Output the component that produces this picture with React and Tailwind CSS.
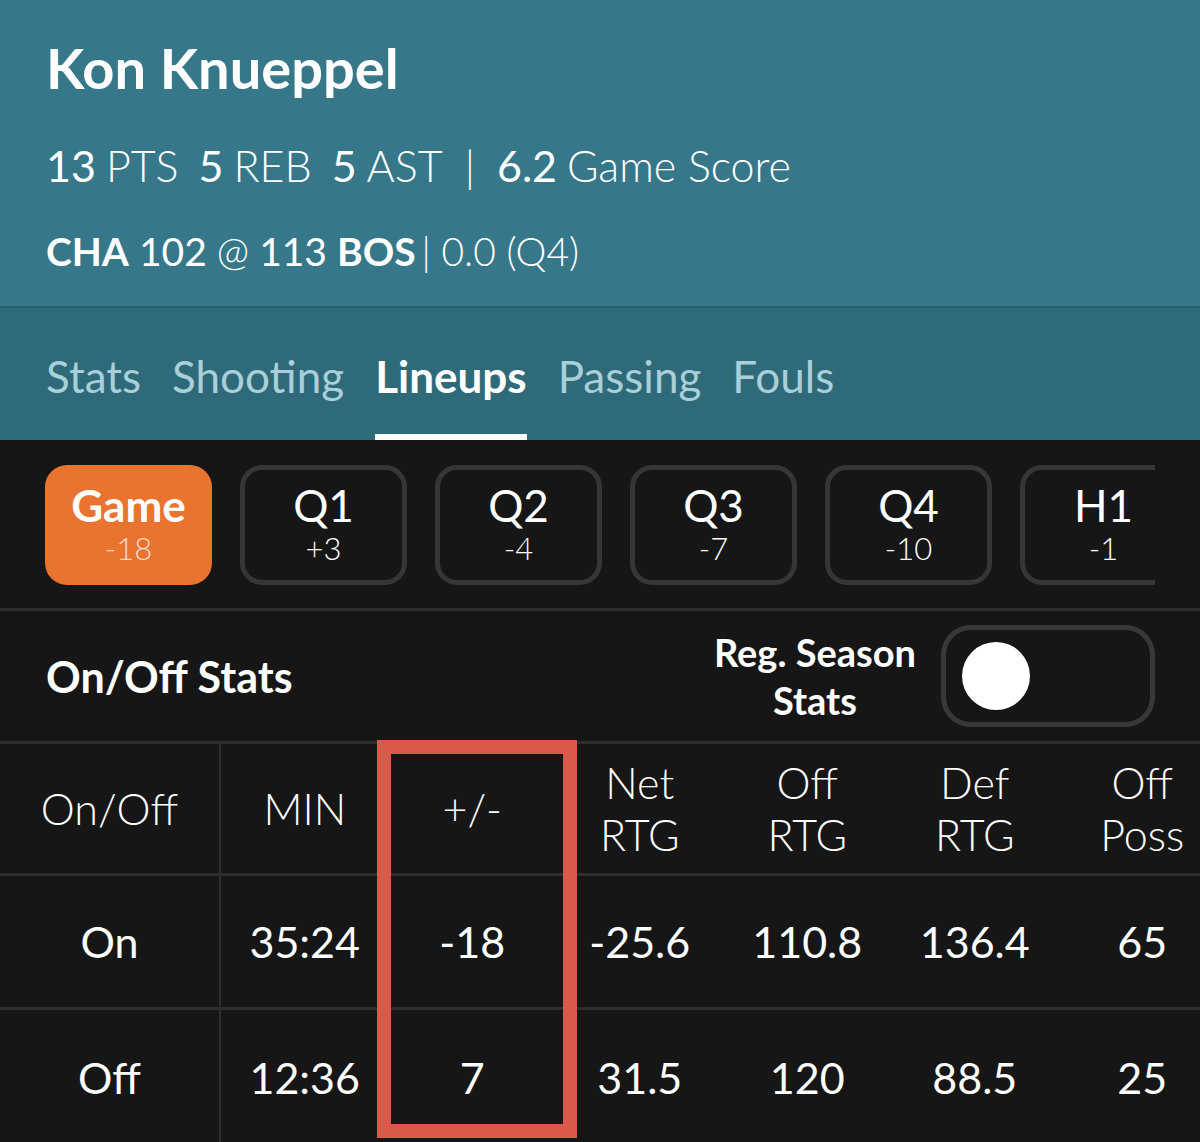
import React from "react";

const periods = [
  { label: "Game", diff: "-18", active: true },
  { label: "Q1", diff: "+3" },
  { label: "Q2", diff: "-4" },
  { label: "Q3", diff: "-7" },
  { label: "Q4", diff: "-10" },
  { label: "H1", diff: "-1" },
];

const tabs = ["Stats", "Shooting", "Lineups", "Passing", "Fouls"];

const headers = [["On/Off"], ["MIN"], ["+/-"], ["Net", "RTG"], ["Off", "RTG"], ["Def", "RTG"], ["Off", "Poss"]];

const rows = [
  ["On", "35:24", "-18", "-25.6", "110.8", "136.4", "65"],
  ["Off", "12:36", "7", "31.5", "120", "88.5", "25"],
];

function PeriodPill({ label, diff, active }) {
  return (
    <div
      className={
        active
          ? "w-[167px] h-[120px] shrink-0 rounded-[22px] bg-[#e8742f] flex flex-col items-center justify-center"
          : "w-[167px] h-[120px] shrink-0 rounded-[22px] border-[5px] border-[#363636] flex flex-col items-center justify-center"
      }
    >
      <div className={active ? "text-[44px] leading-[46px] font-bold" : "text-[44px] leading-[46px]"}>{label}</div>
      <div className={active ? "text-[31px] leading-[40px] font-light text-[#fbd9c4]" : "text-[31px] leading-[40px] font-light"}>
        {diff}
      </div>
    </div>
  );
}

export default function App() {
  return (
    <div className="w-[1200px] h-[1142px] overflow-hidden bg-[#161616] text-white font-['Lato','Noto_Sans',sans-serif]">
      {/* player header */}
      <div className="bg-[#36788a] pl-[46px]">
        <div className="h-[134px] flex items-center pt-[2px]">
          <span className="text-[56px] leading-none font-bold">Kon Knueppel</span>
        </div>
        <div className="h-[62px] flex items-center text-[43px] leading-none font-light">
          <span className="font-normal">13</span>
          <span className="ml-[10px]">PTS</span>
          <span className="font-normal ml-[20px]">5</span>
          <span className="ml-[10px]">REB</span>
          <span className="font-normal ml-[20px]">5</span>
          <span className="ml-[10px]">AST</span>
          <span className="mx-[22px]">|</span>
          <span className="font-normal">6.2</span>
          <span className="ml-[10px]">Game Score</span>
        </div>
        <div className="h-[110px] flex items-center text-[39px] leading-none">
          <span className="font-bold">CHA</span>
          <span className="ml-[10px]">102</span>
          <span className="ml-[10px] font-light">@</span>
          <span className="ml-[10px]">113</span>
          <span className="ml-[10px] font-bold">BOS</span>
          <span className="ml-[6px] font-light">| 0.0 (Q4)</span>
        </div>
      </div>

      {/* tabs */}
      <div className="h-[134px] bg-[#2f6a7a] border-t-2 border-[#2a5f6e] flex gap-[31px] px-[46px]">
        {tabs.map((t) => (
          <div key={t} className="h-full flex flex-col">
            <div
              className={
                t === "Lineups"
                  ? "flex-1 flex items-center pt-[10px] text-[44px] leading-none font-bold text-white"
                  : "flex-1 flex items-center pt-[10px] text-[44px] leading-none text-[#a9cfd8]"
              }
            >
              {t}
            </div>
            <div className={t === "Lineups" ? "h-[6px] bg-white" : "h-[6px]"} />
          </div>
        ))}
      </div>

      {/* period selector */}
      <div className="h-[171px] border-b-[3px] border-[#2e2e2e] px-[45px] pt-[25px]">
        <div className="w-[1110px] flex gap-[28px] overflow-hidden">
          {periods.map((p) => (
            <PeriodPill key={p.label} {...p} />
          ))}
        </div>
      </div>

      {/* on/off heading */}
      <div className="h-[133px] border-b-[3px] border-[#2e2e2e] flex items-center pl-[46px] pr-[45px]">
        <div className="flex-1 text-[43px] leading-none font-bold">On/Off Stats</div>
        <div className="text-[38px] leading-[48px] font-bold text-center mr-[25px]">
          Reg. Season
          <br />
          Stats
        </div>
        <div className="w-[214px] h-[102px] rounded-[30px] border-[5px] border-[#383838] flex items-center pl-[16px]">
          <div className="w-[68px] h-[68px] rounded-full bg-white" />
        </div>
      </div>

      {/* table */}
      <div className="relative">
        <div className="grid grid-cols-[221px_repeat(6,167.5px)] w-[1226px]">
          {headers.map((h, i) => (
            <div
              key={i}
              className={
                i === 0
                  ? "h-[132px] border-r-2 border-[#2e2e2e] border-b-[3px] flex flex-col items-center justify-center text-[43px] leading-[52px] font-light"
                  : "h-[132px] border-b-[3px] border-[#2e2e2e] flex flex-col items-center justify-center text-[43px] leading-[52px] font-light"
              }
            >
              {h.map((line) => (
                <span key={line}>{line}</span>
              ))}
            </div>
          ))}
          {rows.map((r, ri) =>
            r.map((c, ci) => (
              <div
                key={ri + "-" + ci}
                className={
                  (ci === 0 ? "border-r-2 " : "") +
                  (ri === 0 ? "border-b-[3px] " : "") +
                  "h-[134px] border-[#2e2e2e] flex items-center justify-center text-[43px] leading-none"
                }
              >
                {c}
              </div>
            ))
          )}
        </div>
        {/* highlight around +/- column */}
        <div className="absolute left-[377px] top-[-4px] w-[200px] h-[398px] border-[14px] border-[#d95a4a]" />
      </div>
    </div>
  );
}
